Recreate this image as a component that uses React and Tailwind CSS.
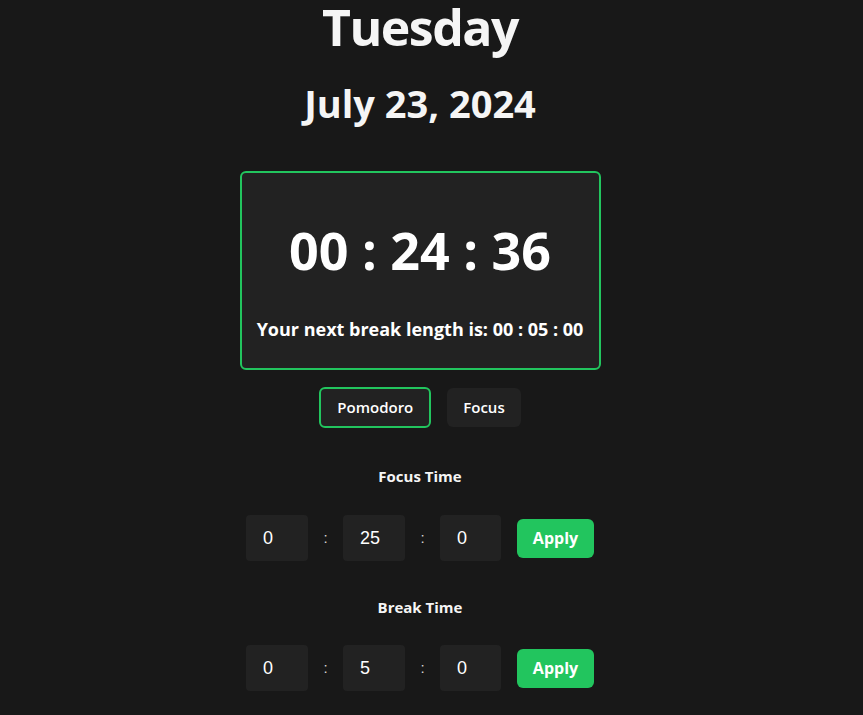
import React, { useState } from "react";

const TimeInputs = ({ values }) => {
  return (
    <div className="flex items-center">
      <input
        defaultValue={values[0]}
        className="w-[62px] h-[46px] bg-[#222222] rounded-[4px] pl-[17px] text-[18px] text-white outline-none font-['Liberation_Sans',Arial,sans-serif]"
      />
      <span className="w-[35px] text-center text-[15px] text-[#d4d4d4] font-['Liberation_Sans',Arial,sans-serif]">:</span>
      <input
        defaultValue={values[1]}
        className="w-[62px] h-[46px] bg-[#222222] rounded-[4px] pl-[17px] text-[18px] text-white outline-none font-['Liberation_Sans',Arial,sans-serif]"
      />
      <span className="w-[35px] text-center text-[15px] text-[#d4d4d4] font-['Liberation_Sans',Arial,sans-serif]">:</span>
      <input
        defaultValue={values[2]}
        className="w-[61px] h-[46px] bg-[#222222] rounded-[4px] pl-[17px] text-[18px] text-white outline-none font-['Liberation_Sans',Arial,sans-serif]"
      />
      <button className="ml-[16px] w-[77px] h-[39px] bg-[#22c55e] rounded-[6px] text-white text-[16px] font-bold">
        Apply
      </button>
    </div>
  );
};

const App = () => {
  const [mode, setMode] = useState("pomodoro");

  return (
    <div className="min-h-screen bg-[#181818] text-[#f5f5f5] font-['Open_Sans',sans-serif]">
      <div className="flex flex-col items-center pr-[23px]">
        {/* Header section */}
        <h1 className="text-[50px] leading-[55px] font-bold tracking-[-1.5px]">Tuesday</h1>
        <h2 className="mt-[29px] text-[38px] leading-none font-bold">July 23, 2024</h2>

        {/* Timer card */}
        <div className="mt-[49px] w-[361px] h-[199px] border-2 border-[#22c55e] rounded-[6px] bg-[#222222] flex flex-col items-center">
          <p className="mt-[51px] text-[52px] leading-none font-bold text-white">00 : 24 : 36</p>
          <p className="mt-[44px] text-[18px] leading-none font-bold text-white">
            Your next break length is: 00 : 05 : 00
          </p>
        </div>

        {/* Mode buttons */}
        <div className="mt-[17px] flex items-center gap-4">
          <button
            onClick={() => setMode("pomodoro")}
            className={
              mode === "pomodoro"
                ? "h-[41px] px-[16px] border-2 border-[#22c55e] rounded-[6px] bg-[#222222] text-[15px] font-semibold text-white"
                : "h-[39px] px-[16px] rounded-[6px] bg-[#222222] text-[15px] font-semibold text-white"
            }
          >
            Pomodoro
          </button>
          <button
            onClick={() => setMode("focus")}
            className={
              mode === "focus"
                ? "h-[41px] px-[16px] border-2 border-[#22c55e] rounded-[6px] bg-[#222222] text-[15px] font-semibold text-white"
                : "h-[39px] px-[16px] rounded-[6px] bg-[#222222] text-[15px] font-semibold text-white"
            }
          >
            Focus
          </button>
        </div>

        {/* Settings */}
        <p className="mt-[41px] text-[15px] leading-none font-bold">Focus Time</p>
        <div className="mt-[31px]">
          <TimeInputs values={["0", "25", "0"]} />
        </div>
        <p className="mt-[39px] text-[15px] leading-none font-bold">Break Time</p>
        <div className="mt-[30px]">
          <TimeInputs values={["0", "5", "0"]} />
        </div>
      </div>
    </div>
  );
};

export default App;
